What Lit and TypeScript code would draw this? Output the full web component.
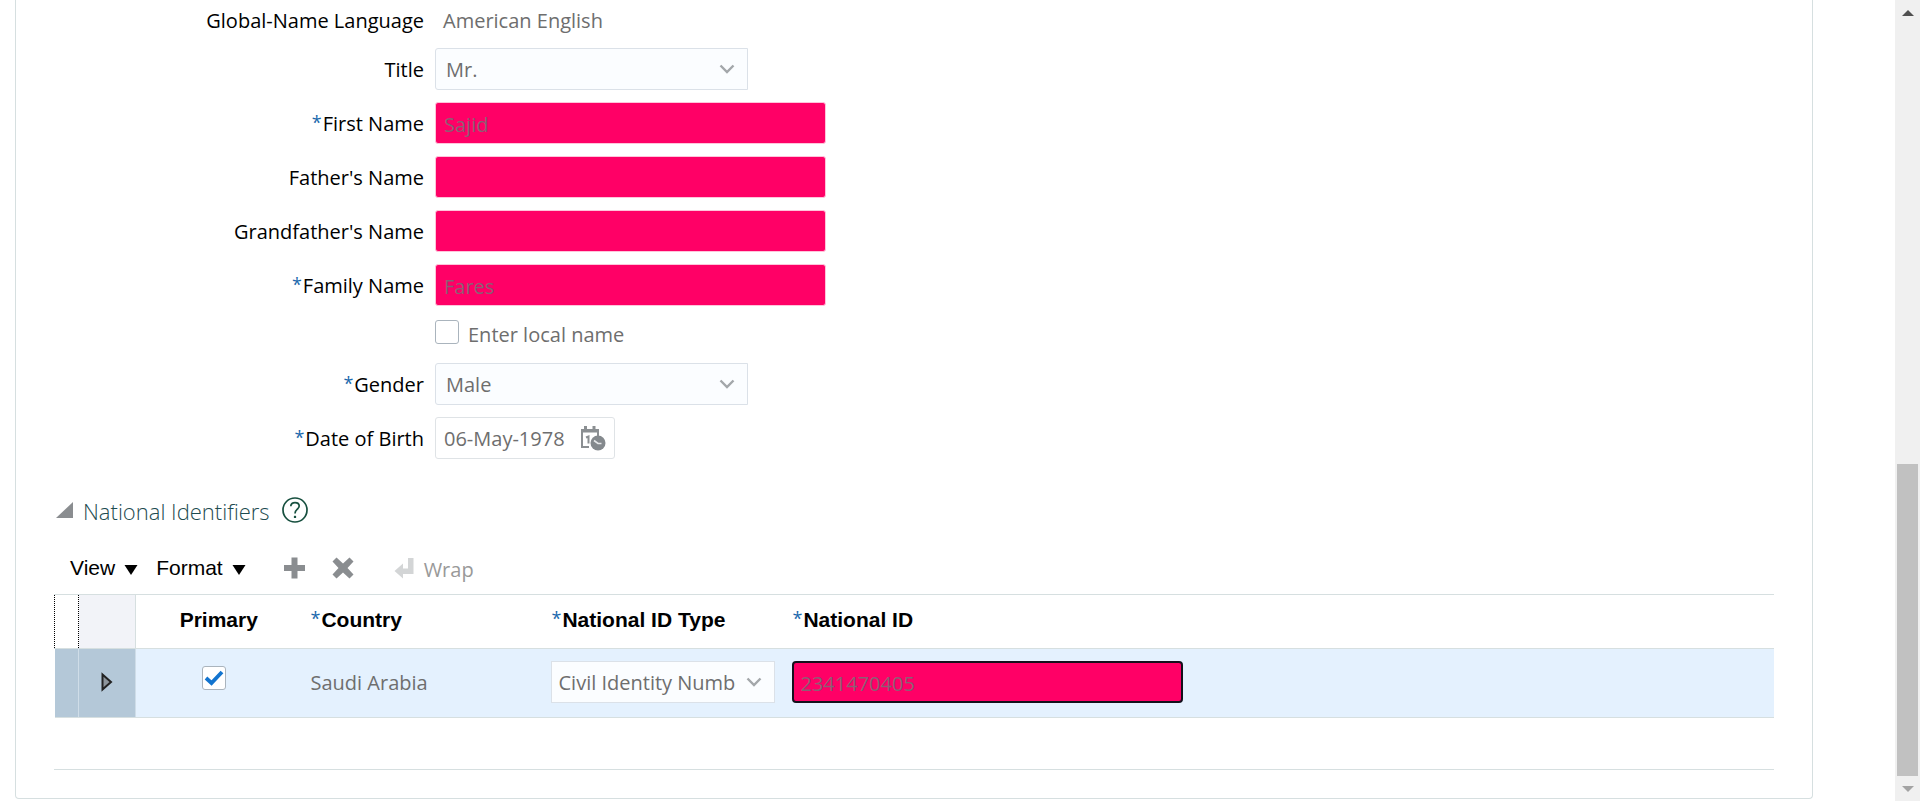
import { LitElement, html, css, svg, nothing } from "lit";
import { customElement, state } from "lit/decorators.js";

interface Field {
  id: string;
  label: string;
  kind: "select" | "masked" | "date";
  value: string;
  required?: boolean;
}

const NAME_FIELDS: Field[] = [
  { id: "title", label: "Title", kind: "select", value: "Mr." },
  { id: "first", label: "First Name", kind: "masked", value: "Sajid", required: true },
  { id: "father", label: "Father's Name", kind: "masked", value: "" },
  { id: "grandfather", label: "Grandfather's Name", kind: "masked", value: "" },
  { id: "family", label: "Family Name", kind: "masked", value: "Fares", required: true },
];

const DETAIL_FIELDS: Field[] = [
  { id: "gender", label: "Gender", kind: "select", value: "Male", required: true },
  { id: "dob", label: "Date of Birth", kind: "date", value: "06-May-1978", required: true },
];

const chevron = html`<svg class="chevron" width="16" height="10" viewBox="0 0 16 10" aria-hidden="true">
  ${svg`<path d="M1.5 1.5 L8 8 L14.5 1.5" fill="none" stroke="#a3a7aa" stroke-width="2.4"/>`}
</svg>`;

const caret = html`<svg class="caret" width="14" height="10" viewBox="0 0 14 10" aria-hidden="true">
  <path d="M0.5 0 H13.5 L7 10 Z" fill="#000" />
</svg>`;

@customElement("app-root")
export class AppRoot extends LitElement {
  @state() private localName = false;
  @state() private primary = true;

  static styles = css`
    :host {
      display: flex;
      height: 100vh;
      overflow: hidden;
      background: #fff;
      color: #000;
      font: 500 20px/28px "Open Sans", "Noto Sans", sans-serif;
    }
    * {
      box-sizing: border-box;
    }
    button,
    input,
    select {
      font: inherit;
      color: inherit;
      margin: 0;
    }
    button {
      display: inline-flex;
      align-items: center;
      padding: 0;
      border: 0;
      background: none;
    }
    main {
      flex: 1;
      min-width: 0;
      padding: 0 82px 0 15px;
    }
    .card {
      border: 1px solid #d6dfe0;
      border-top: 0;
      border-radius: 0 0 4px 4px;
      padding: 0 38px 28px;
    }
    .row {
      display: grid;
      grid-template-columns: 370px 1fr;
      column-gap: 11px;
      align-items: center;
      height: 54px;
    }
    .row.top {
      height: 42px;
    }
    .row.check {
      height: 45px;
    }
    .label {
      text-align: right;
      white-space: nowrap;
    }
    label.label {
      padding-top: 2px;
    }
    .star {
      color: #1b69ad;
      font: 500 18px/18px "Open Sans", "Noto Sans", sans-serif;
      vertical-align: 2px;
      margin-right: 1px;
    }
    .output {
      color: #6e6e6e;
      padding-left: 8px;
    }
    .pick {
      display: grid;
      width: 313px;
      align-items: center;
    }
    .pick > * {
      grid-area: 1 / 1;
    }
    .pick select {
      appearance: none;
      width: 100%;
      height: 42px;
      padding: 2px 38px 0 10px;
      border: 1px solid #dbe1e8;
      border-radius: 3px 0 0 3px;
      background: #fbfdff;
      color: #6e6e6e;
    }
    .chevron {
      justify-self: end;
      margin-right: 13px;
      pointer-events: none;
    }
    .masked {
      display: block;
      width: 391px;
      height: 42px;
      padding: 2px 8px 0;
      border: 1px solid #ffc4da;
      border-radius: 3px;
      background: #ff0066;
      color: #8c5f74;
    }
    .date {
      display: flex;
      align-items: center;
      width: 180px;
      height: 42px;
      padding: 0 8px;
      border: 1px solid #dfe3e6;
      border-radius: 3px;
      color: #6e6e6e;
    }
    .date input {
      flex: 1;
      min-width: 0;
      padding: 2px 0 0;
      border: 0;
      background: none;
    }
    .tick {
      display: flex;
      align-items: center;
      gap: 9px;
      color: #6e6e6e;
    }
    .box {
      appearance: none;
      flex: none;
      width: 24px;
      height: 24px;
      margin-bottom: 6px;
      border: 1px solid #aab4bd;
      border-radius: 3px;
      background: #fff;
    }
    .box:checked {
      background: #fff
        url("data:image/svg+xml,%3Csvg xmlns='http://www.w3.org/2000/svg' viewBox='0 0 22 22'%3E%3Cpath d='M3 11 L8.5 16 L19 5' fill='none' stroke='%231274cf' stroke-width='3.8'/%3E%3C/svg%3E");
    }
    .section {
      display: flex;
      align-items: center;
      height: 32px;
      margin-top: 30px;
      padding-left: 2px;
    }
    .section button {
      margin-bottom: 2px;
    }
    h2 {
      margin: 0 12px 0 10px;
      font: 300 22px/32px "Open Sans", "Noto Sans", sans-serif;
      color: #1d4b50;
    }
    .toolbar {
      display: flex;
      align-items: center;
      height: 40px;
      margin-top: 21px;
      padding: 0 16px;
    }
    .menu {
      gap: 9px;
      margin-right: 18px;
      font: 21px/28px "Liberation Sans", Arial, sans-serif;
    }
    .caret {
      margin-top: 4px;
    }
    .icons {
      display: flex;
      gap: 27px;
      margin: 0 40px 0 20px;
    }
    .wrap {
      gap: 10px;
      color: #999;
    }
    .wrap span {
      padding-top: 4px;
    }
    .grid {
      width: 100%;
      margin-top: 6px;
      border-collapse: collapse;
      table-layout: fixed;
    }
    .grid th,
    .grid td {
      padding: 0 0 0 9px;
      border-top: 1px solid #d6dfe0;
      text-align: left;
      white-space: nowrap;
    }
    .grid th {
      height: 54px;
      padding-bottom: 4px;
      font: bold 21px/28px "Liberation Sans", Arial, sans-serif;
    }
    .grid td {
      height: 69px;
      border-bottom: 1px solid #d6dfe0;
      background: #e4f1fe;
      color: #6e6e6e;
    }
    .grid .center {
      padding: 0 0 4px;
      text-align: center;
    }
    .grid th.focus {
      border: 1px dotted #000;
      border-top: 1px solid #d6dfe0;
    }
    .grid th.blank {
      background: #f2f3f8;
      border-right: 1px solid #d6dfe0;
    }
    .grid td.head {
      padding: 0 0 6px;
      background: #b4c8d8;
      border-right: 1px solid #cfdde8;
      text-align: center;
    }
    .head button,
    .center input {
      vertical-align: middle;
    }
    .center input {
      margin-right: 10px;
    }
    .c-focus {
      width: 24px;
    }
    .c-head {
      width: 57px;
    }
    .c-primary {
      width: 166px;
    }
    .c-mid {
      width: 241px;
    }
    .grid .pick,
    .grid .masked {
      margin: 0 0 2px -1px;
    }
    .grid .pick {
      width: 224px;
    }
    .grid .pick select {
      padding-left: 7px;
      border-radius: 0;
    }
    .grid .masked {
      border: 2px solid #14101c;
      border-radius: 4px;
      padding: 2px 7px 0;
    }
    hr {
      margin: 51px 0 0;
      border: 0;
      border-top: 1px solid #d6dfe0;
    }
    .scroll {
      display: flex;
      flex-direction: column;
      align-items: center;
      width: 25px;
      background: #f0f0f0;
    }
    .scroll button {
      justify-content: center;
      width: 25px;
      height: 25px;
    }
    .gap {
      flex: 439;
    }
    .thumb {
      flex: 312;
      width: 21px;
      background: #c1c1c1;
    }
  `;

  private star(required?: boolean) {
    return required ? html`<span class="star">*</span>` : nothing;
  }

  private control(f: Field) {
    switch (f.kind) {
      case "select":
        return html`<div class="pick">
          <select id=${f.id}>
            <option>${f.value}</option>
          </select>
          ${chevron}
        </div>`;
      case "date":
        return html`<div class="date">
          <input id=${f.id} .value=${f.value} />
          <button aria-label="Select date">
            <svg width="26" height="26" viewBox="0 0 26 26">
              <path d="M2 6 H18 V12 M2 5 V22 H9" fill="none" stroke="#8b8f92" stroke-width="2" />
              <path d="M1 4 H19 V7.5 H1 Z M4 1 H7 V5 H4 Z M12.5 1 H15.5 V5 H12.5 Z" fill="#8b8f92" />
              <path d="M6 12.5 L8.5 11.5 V18.5" fill="none" stroke="#8b8f92" stroke-width="2" />
              <circle cx="18" cy="18" r="7.5" fill="#84898d" />
              <path d="M14 15.5 L18 18.5 H21.5" fill="none" stroke="#e6e8e9" stroke-width="1.6" />
            </svg>
          </button>
        </div>`;
      default:
        return html`<input class="masked" id=${f.id} .value=${f.value} />`;
    }
  }

  private field(f: Field) {
    return html`<div class="row">
      <label class="label" for=${f.id}>${this.star(f.required)}${f.label}</label>
      <div>${this.control(f)}</div>
    </div>`;
  }

  render() {
    return html`
      <main>
        <div class="card">
          <div class="row top">
            <span class="label">Global-Name Language</span>
            <span class="output">American English</span>
          </div>
          ${NAME_FIELDS.map((f) => this.field(f))}
          <div class="row check">
            <span></span>
            <label class="tick">
              <input
                class="box"
                type="checkbox"
                .checked=${this.localName}
                @change=${() => (this.localName = !this.localName)}
              />
              Enter local name
            </label>
          </div>
          ${DETAIL_FIELDS.map((f) => this.field(f))}

          <div class="section">
            <button aria-label="Collapse National Identifiers">
              <svg width="17" height="17" viewBox="0 0 17 17"><path d="M17 0 V16 H0 Z" fill="#8a8d90" /></svg>
            </button>
            <h2>National Identifiers</h2>
            <button aria-label="Help">
              <svg width="26" height="26" viewBox="0 0 26 26" fill="none" stroke="#17503f" stroke-width="1.7">
                <circle cx="13" cy="13" r="12" />
                <path d="M8.8 9.3 C8.8 6.8 10.6 5.6 13 5.6 C15.4 5.6 17.2 7 17.2 9.1 C17.2 12.2 13 12.3 13 16.5" />
                <path d="M13 18.8 V21" stroke-width="2.2" />
              </svg>
            </button>
          </div>

          <div class="toolbar">
            <button class="menu">View ${caret}</button>
            <button class="menu">Format ${caret}</button>
            <div class="icons">
              <button aria-label="Add row">
                <svg width="21" height="22" viewBox="0 0 21 22">
                  <path d="M7.5 0.5 H13.5 V8 H21 V14 H13.5 V21.5 H7.5 V14 H0 V8 H7.5 Z" fill="#8a8d90" />
                </svg>
              </button>
              <button aria-label="Delete row">
                <svg width="22" height="22" viewBox="0 0 22 22">
                  <path
                    d="M4.5 0.5 L11 6.5 L17.5 0.5 L21.5 4.5 L15.5 11 L21.5 17.5 L17.5 21.5 L11 15.5 L4.5 21.5 L0.5 17.5 L6.5 11 L0.5 4.5 Z"
                    fill="#8a8d90"
                  />
                </svg>
              </button>
            </div>
            <button class="wrap">
              <svg width="20" height="22" viewBox="0 0 20 22">
                <path d="M14 1 H19.5 V17 H9 V21.5 L0.5 14 L9 6.5 V11.5 H14 Z" fill="#d3d5d6" />
              </svg>
              <span>Wrap</span>
            </button>
          </div>

          <table class="grid">
            <colgroup>
              <col class="c-focus" />
              <col class="c-head" />
              <col class="c-primary" />
              <col class="c-mid" />
              <col class="c-mid" />
              <col />
            </colgroup>
            <thead>
              <tr>
                <th class="focus"></th>
                <th class="blank"></th>
                <th class="center">Primary</th>
                <th>${this.star(true)}Country</th>
                <th>${this.star(true)}National ID Type</th>
                <th>${this.star(true)}National ID</th>
              </tr>
            </thead>
            <tbody>
              <tr>
                <td class="head"></td>
                <td class="head">
                  <button aria-label="Expand row">
                    <svg width="12" height="20" viewBox="0 0 12 20">
                      <path d="M1.5 2.5 L10 10 L1.5 17.5 Z" fill="#8d959c" stroke="#222" stroke-width="2" />
                    </svg>
                  </button>
                </td>
                <td class="center">
                  <input
                    class="box"
                    type="checkbox"
                    aria-label="Primary"
                    .checked=${this.primary}
                    @change=${() => (this.primary = !this.primary)}
                  />
                </td>
                <td>Saudi Arabia</td>
                <td>
                  <div class="pick">
                    <select aria-label="National ID Type">
                      <option>Civil Identity Number</option>
                    </select>
                    ${chevron}
                  </div>
                </td>
                <td><input class="masked" aria-label="National ID" .value=${"2341470405"} /></td>
              </tr>
            </tbody>
          </table>
          <hr />
        </div>
      </main>
      <div class="scroll">
        <button aria-label="Scroll up">
          <svg width="12" height="6" viewBox="0 0 12 6"><path d="M0 6 L6 0 L12 6 Z" fill="#505050" /></svg>
        </button>
        <div class="gap"></div>
        <div class="thumb"></div>
        <button aria-label="Scroll down">
          <svg width="12" height="6" viewBox="0 0 12 6"><path d="M0 0 L6 6 L12 0 Z" fill="#a3a3a3" /></svg>
        </button>
      </div>
    `;
  }
}
